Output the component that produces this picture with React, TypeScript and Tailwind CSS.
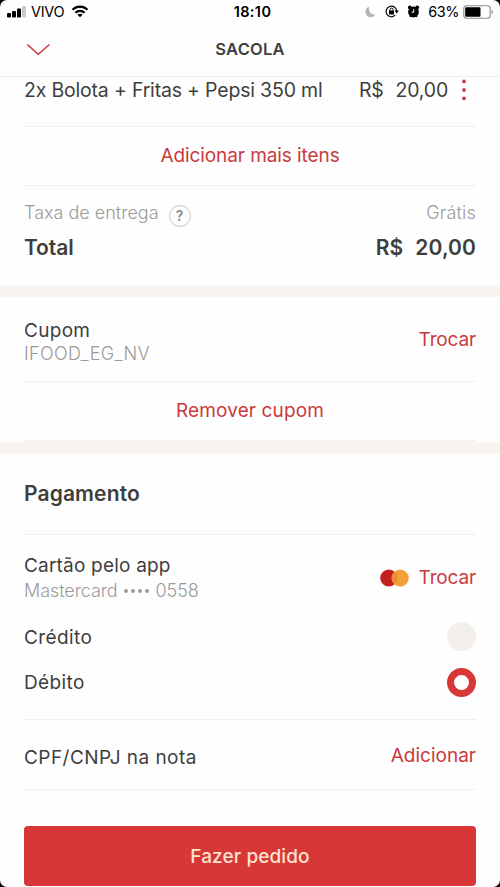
import type { ReactNode } from 'react'

const order = {
  item: '2x Bolota + Fritas + Pepsi 350 ml',
  total: '20,00',
  coupon: 'IFOOD_EG_NV',
  card: '0558',
}

export default function App() {
  return (
    <div className="w-full h-[887px] bg-black overflow-hidden font-['Inter','Liberation_Sans',sans-serif]">
      <div className="h-full flex flex-col bg-[#fefefe] rounded-[7px] text-[#3f3e3e]">
        <StatusBar />
        <Header />

        {/* Itens */}
        <section className="px-6">
          <div className="h-[49px] flex items-start text-[19.5px] leading-[26px]">
            <span className="tracking-[-0.19px] whitespace-nowrap">{order.item}</span>
            <span className="ml-auto flex gap-[12px] tracking-[-0.2px]">
              <span>R$</span>
              <span>{order.total}</span>
            </span>
            <DotsIcon />
          </div>
          <Divider />
          <LinkRow className="h-[58px] tracking-[-0.08px]">Adicionar mais itens</LinkRow>
          <Divider />
          <div className="h-[99px] pt-[14px]">
            <div className="flex h-[27px] items-start text-[18px] leading-[26px] text-[#9b9a99]">
              <span className="font-light">Taxa de entrega</span>
              <span className="ml-[10px] mt-[5px] size-[22px] rounded-full border border-[#c9c8c7] flex items-center justify-center text-[14px] font-semibold text-[#8d8c8b]">
                ?
              </span>
              <span className="ml-auto font-light tracking-[0.2px]">Grátis</span>
            </div>
            <div className="flex justify-between pt-[7px] text-[21px] leading-[28px] font-semibold">
              <span className="tracking-[-0.1px]">Total</span>
              <span className="flex gap-[12px] tracking-[0.1px]">
                <span>R$</span>
                <span>{order.total}</span>
              </span>
            </div>
          </div>
        </section>

        <div className="h-3 bg-[#f7f4f2]" />

        {/* Cupom */}
        <section className="px-6">
          <div className="h-[84px] flex items-center justify-between">
            <div className="pt-[5px]">
              <p className="text-[19px] leading-[24px] tracking-[0.3px]">Cupom</p>
              <p className="text-[18px] leading-[22px] font-light tracking-[0.35px] text-[#9b9a99]">{order.coupon}</p>
            </div>
            <button className="pt-[2px] text-[19px] tracking-[-0.15px] text-[#c93a40]">Trocar</button>
          </div>
          <Divider />
          <LinkRow className="h-[58px] tracking-[0.13px]">Remover cupom</LinkRow>
          <div className="h-[2px] bg-[#f7f4f2]" />
        </section>

        <div className="h-3 bg-[#f7f4f2]" />

        {/* Pagamento */}
        <section className="px-6">
          <h2 className="h-[80px] text-[21px] leading-[80px] font-semibold tracking-[0.12px]">Pagamento</h2>
          <Divider />
          <div className="h-[79px] pt-[7px] flex items-center justify-between">
            <div>
              <p className="text-[19px] leading-[26px] tracking-[0.2px]">Cartão pelo app</p>
              <p className="text-[18px] leading-[24px] font-light tracking-[-0.08px] text-[#9b9a99] flex items-center">
                Mastercard
                <span className="flex gap-[3px] ml-[6px] mr-[7px]">
                  {[0, 1, 2, 3].map((dot) => (
                    <i key={dot} className="size-[4px] rounded-full bg-[#9b9a99]" />
                  ))}
                </span>
                {order.card}
              </p>
            </div>
            <div className="flex items-center gap-[10px]">
              <MastercardIcon />
              <button className="text-[19px] tracking-[-0.15px] text-[#c93a40]">Trocar</button>
            </div>
          </div>
          <Option label="Crédito" />
          <Option label="Débito" checked />
          <div className="h-[14px]" />
          <Divider />
          <div className="h-[69px] flex items-center justify-between text-[19px]">
            <span className="pt-[7px] tracking-[0.45px]">CPF/CNPJ na nota</span>
            <button className="pt-[3px] text-[#c93a40]">Adicionar</button>
          </div>
          <Divider />
        </section>

        <div className="px-6 pt-9">
          <button className="w-full h-[60px] pt-[2px] rounded-[4px] bg-[#d73837] text-[#fde3cf] text-[19px] font-medium tracking-[0.1px]">
            Fazer pedido
          </button>
        </div>
      </div>
    </div>
  )
}

function Divider() {
  return <div className="h-px bg-[#efefef]" />
}

function LinkRow({ children, className }: { children: ReactNode; className: string }) {
  return (
    <div className={`flex items-center justify-center text-[19px] text-[#c93a40] ${className}`}>
      <button className="pt-px">{children}</button>
    </div>
  )
}

function Option({ label, checked }: { label: string; checked?: boolean }) {
  return (
    <div className="h-[45.5px] flex items-center justify-between text-[19px] tracking-[0.4px]">
      <span className="pt-[2px]">{label}</span>
      {checked ? (
        <span className="size-[29px] rounded-full border-[7px] border-[#d73837] bg-white" />
      ) : (
        <span className="size-[29px] rounded-full bg-[#f2efeb]" />
      )}
    </div>
  )
}

function Header() {
  return (
    <header className="h-[54px] shrink-0 px-6 grid grid-cols-3 items-center border-b border-[#ebebeb]">
      <svg className="ml-[2px]" width="25" height="14" viewBox="0 0 25 14" fill="none">
        <path d="M1.2 1.5L12.3 11.3L23.4 1.5" stroke="#c93a40" strokeWidth="1.6" />
      </svg>
      <h1 className="text-center text-[16.5px] font-semibold tracking-[0.2px]">SACOLA</h1>
    </header>
  )
}

function StatusBar() {
  return (
    <div className="h-[23px] shrink-0 relative flex items-center text-black text-[14.5px] leading-[23px]">
      <svg className="ml-[7px]" width="20" height="12" viewBox="0 0 20 12">
        <rect x="0" y="7" width="4" height="4.5" rx="1" />
        <rect x="5" y="5" width="4" height="6.5" rx="1" />
        <rect x="10" y="2.5" width="4" height="9" rx="1" />
        <rect x="15" y="0" width="4" height="11.5" rx="1" fill="#c9c9c9" />
      </svg>
      <span className="ml-[4px] tracking-[-0.3px]">VIVO</span>
      <svg className="ml-[7px]" width="18" height="13" viewBox="0 0 17 13" fill="none" stroke="#000" strokeWidth="2.1">
        <path d="M1 4.7C5.2 0.6 11.8 0.6 16 4.7" />
        <path d="M3.9 7.7C6.5 5.2 10.5 5.2 13.1 7.7" />
        <path d="M8.5 12.3L5.9 9.7C7.4 8.4 9.6 8.4 11.1 9.7Z" fill="#000" stroke="none" />
      </svg>
      <span className="absolute inset-x-0 text-center font-semibold pl-[5px] tracking-[0.4px]">18:10</span>
      <div className="ml-auto flex items-center">
        <svg width="11" height="12" viewBox="0 0 11 12" fill="#b5b5b5">
          <path d="M4.3 0.6C2.8 4.8 5.8 9 10.5 8.6C8 12.4 2.6 12 0.9 8C-0.4 4.8 1.2 1.6 4.3 0.6Z" />
        </svg>
        <svg className="ml-[9px]" width="14" height="13" viewBox="0 0 14 13" fill="none" stroke="#000">
          <path d="M10.2 10.2A5.3 5.3 0 1 1 11.7 6" strokeWidth="1.2" />
          <path d="M9.6 5.6H13.8L11.7 8.4Z" fill="#000" stroke="none" />
          <rect x="4" y="5.6" width="5" height="3.8" rx="0.5" fill="#000" stroke="none" />
          <path d="M5 5.8V4.6A1.5 1.5 0 0 1 8 4.6V5.8" />
        </svg>
        <svg className="ml-[8px]" width="13" height="13" viewBox="0 0 13 13">
          <circle cx="6.5" cy="7" r="5.4" />
          <circle cx="2.8" cy="2.5" r="1.9" />
          <circle cx="10.2" cy="2.5" r="1.9" />
          <path d="M3 12L4 10M10 12L9 10" stroke="#000" strokeWidth="1.4" />
          <path d="M6.7 4.2V7.2H4.5" fill="none" stroke="#fff" />
        </svg>
        <span className="ml-[8px] tracking-[-0.5px]">63%</span>
        <svg className="ml-[4px] mr-[6px]" width="31" height="14" viewBox="0 0 31 14">
          <rect x="0.8" y="0.8" width="26.4" height="12.4" rx="2.6" fill="#fff" stroke="#8a8a8a" strokeWidth="1.1" />
          <rect x="2.2" y="2.2" width="15.3" height="9.6" rx="1" />
          <path d="M28.6 5C30.4 5.5 30.4 8.5 28.6 9Z" fill="#8a8a8a" />
        </svg>
      </div>
    </div>
  )
}

function DotsIcon() {
  return (
    <svg className="ml-[13px] mt-[2px] mr-[9px]" width="6" height="22" viewBox="0 0 6 22" fill="#d03a40">
      <circle cx="3" cy="2.4" r="1.9" />
      <circle cx="3" cy="10.9" r="1.9" />
      <circle cx="3" cy="19.3" r="1.9" />
    </svg>
  )
}

function MastercardIcon() {
  return (
    <svg width="29" height="18" viewBox="0 0 29 18">
      <circle cx="8.8" cy="9" r="8.6" fill="#c0211c" />
      <circle cx="20.2" cy="9" r="8.6" fill="#f3a136" />
      <path d="M14.5 2.5A8.6 8.6 0 0 1 14.5 15.5A8.6 8.6 0 0 1 14.5 2.5Z" fill="#ee8b35" />
    </svg>
  )
}
